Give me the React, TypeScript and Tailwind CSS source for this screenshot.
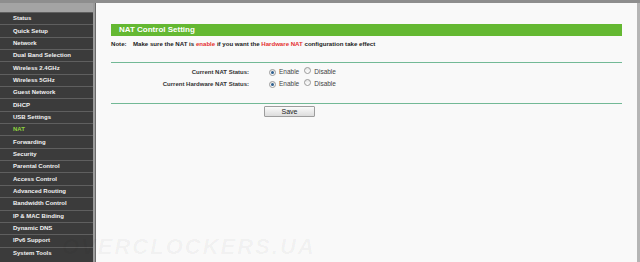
const menu = [
  'Status',
  'Quick Setup',
  'Network',
  'Dual Band Selection',
  'Wireless 2.4GHz',
  'Wireless 5GHz',
  'Guest Network',
  'DHCP',
  'USB Settings',
  'NAT',
  'Forwarding',
  'Security',
  'Parental Control',
  'Access Control',
  'Advanced Routing',
  'Bandwidth Control',
  'IP & MAC Binding',
  'Dynamic DNS',
  'IPv6 Support',
  'System Tools',
]

function Radio({ checked }: { checked?: boolean }) {
  return (
    <span className="inline-flex items-center justify-center w-[7px] h-[7px] rounded-full border border-[#9a9a9a] bg-gradient-to-b from-[#e6e6e6] to-[#ffffff]">
      {checked && <span className="w-[3px] h-[3px] rounded-full bg-[#2d5f8f]" />}
    </span>
  )
}

function StatusRow({ label }: { label: string }) {
  return (
    <div className="flex items-center h-[12px]">
      <div className="w-[138px] text-right font-bold text-[#333]">{label}</div>
      <div className="flex items-center ml-[20px] gap-[3px] text-[6.5px] font-normal text-[#444]">
        <Radio checked />
        <span>Enable</span>
        <span className="ml-[2px]">
          <Radio />
        </span>
        <span>Disable</span>
      </div>
    </div>
  )
}

export default function App() {
  return (
    <div className="relative w-[640px] h-[262px] overflow-hidden flex flex-col bg-[#f9f9f9] font-['Liberation_Sans',Arial,sans-serif]">
      <div className="h-[3px] bg-[#8e8e8e]" />
      <div className="flex flex-1 min-h-0">
        <aside className="w-[93px] bg-[#3b3b3b] flex flex-col">
          <div className="h-[9px] bg-[#a4a4a4]" />
          {menu.map((item) => (
            <div
              key={item}
              className={`h-[12.35px] flex items-center pl-[13px] border-t border-[#5f5f5f] text-[6px] font-bold ${
                item === 'NAT' ? 'text-[#8fd43f]' : 'text-[#f2f2f2]'
              }`}
            >
              {item}
            </div>
          ))}
        </aside>
        <div className="w-[2px] bg-[#9c9c9c]" />
        <div className="w-[1px] bg-[#6a6a6a]" />
        <main className="flex-1 pl-[15px] pr-[15px] pt-[21px] border-r-[3px] border-[#b5b5b5] text-[6px]">
          <div className="h-[12px] bg-[#64b832] flex items-center pl-[8px] text-[8px] font-bold text-white">
            NAT Control Setting
          </div>
          <div className="flex mt-[3px] font-bold text-[#222] text-[6.1px]">
            <span className="w-[22px]">Note:</span>
            <span>
              Make sure the NAT is <span className="text-[#e53030]">enable</span> if you want the{' '}
              <span className="text-[#e53030]">Hardware NAT</span> configuration take effect
            </span>
          </div>
          <div className="mt-[14px] h-px bg-[#72b996]" />
          <div className="pt-[3px] pb-[13px]">
            <StatusRow label="Current NAT Status:" />
            <StatusRow label="Current Hardware NAT Status:" />
          </div>
          <div className="h-px bg-[#72b996]" />
          <div className="mt-[2px] pl-[153px]">
            <button className="w-[51px] h-[11px] border border-[#9d9d9d] rounded-[1px] bg-gradient-to-b from-[#fbfbfb] to-[#dcdcdc] text-[7px] text-[#222] leading-none">
              Save
            </button>
          </div>
        </main>
      </div>
      <div className="absolute left-[62px] top-[236px] text-[22px] leading-none font-bold italic tracking-[2px] text-black/[0.04] pointer-events-none select-none">
        OVERCLOCKERS.UA
      </div>
    </div>
  )
}
